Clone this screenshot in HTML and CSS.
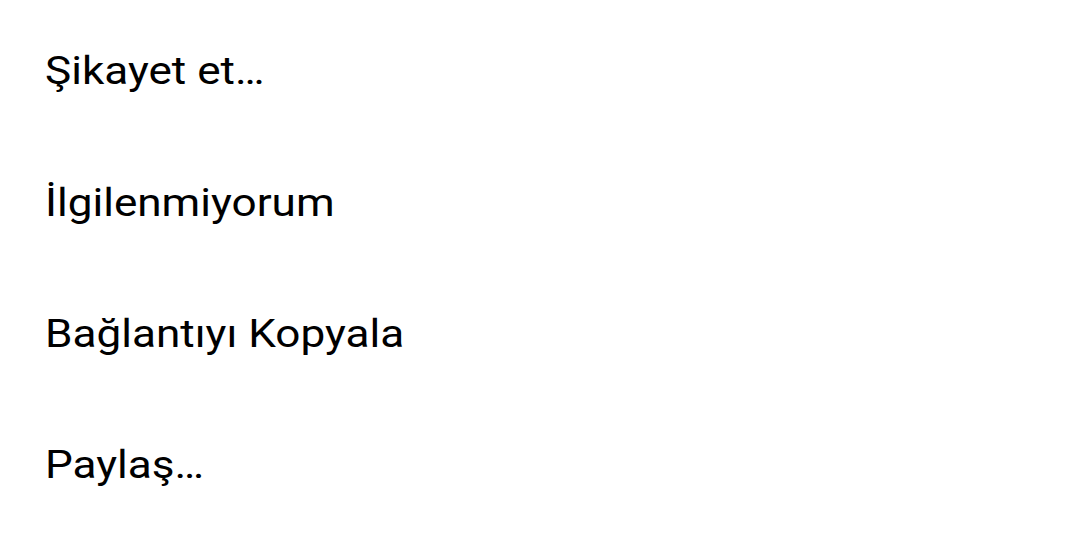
FILE: index.html
```html
<!DOCTYPE html>
<html lang="tr">
<head>
<meta charset="utf-8">
<link rel="stylesheet" href="styles.css">
</head>
<body>
<ul class="menu">
  <li class="item"><span class="label">Şikayet et…</span></li>
  <li class="item"><span class="label">İlgilenmiyorum</span></li>
  <li class="item"><span class="label">Bağlantıyı Kopyala</span></li>
  <li class="item"><span class="label">Paylaş…</span></li>
</ul>
</body>
</html>
```
FILE: styles.css
```css
html, body {
  margin: 0;
  padding: 0;
  background: #ffffff;
}
body {
  width: 1080px;
  height: 557px;
  overflow: hidden;
  font-family: Roboto, "Noto Sans", sans-serif;
  color: #000000;
}
.menu {
  list-style: none;
  margin: 0;
  padding: 6.3px 0 0 0;
  display: flex;
  flex-direction: column;
}
.item {
  height: 131.3px;
  line-height: 131.3px;
  padding-left: 45px;
  font-size: 38px;
  white-space: nowrap;
}
.label {
  display: inline-block;
  transform: scaleX(1.16);
  transform-origin: left center;
}
```
